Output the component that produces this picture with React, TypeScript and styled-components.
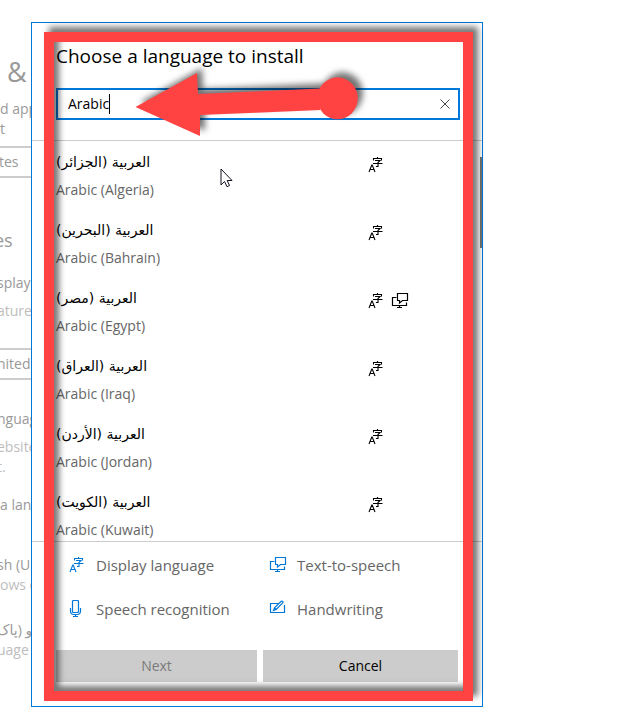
import React, { useState } from "react";
import styled, { createGlobalStyle } from "styled-components";

const Global = createGlobalStyle`
  * { box-sizing: border-box; }
  body {
    margin: 0;
    background: #fff;
    font-family: "Open Sans", "Noto Sans", "DejaVu Sans", sans-serif;
    font-size: 14px;
    line-height: 20px;
    color: #000;
  }
`;

const Page = styled.div`
  display: flex;
  height: 100vh;
  min-height: 480px;
  overflow: hidden;
`;

const Backdrop = styled.aside`
  flex: 0 0 31px;
  padding-top: 52px;
  overflow: hidden;
  white-space: nowrap;
`;

const BackHeading = styled.h1`
  margin: 0 0 7px 7px;
  font-size: 27px;
  font-weight: 400;
  line-height: 40px;
  color: #999;
`;

const BackSubheading = styled.h2<{ $gap: number }>`
  margin: ${(p) => p.$gap}px 0 0 -6px;
  font-size: 18px;
  font-weight: 400;
  line-height: 28px;
  color: #999;
`;

const BackText = styled.p<{ $gap?: number; $faint?: boolean; $cut?: boolean }>`
  margin: ${(p) => p.$gap ?? 0}px 0 0 ${(p) => (p.$cut ? "-3px" : "0")};
  color: ${(p) => (p.$faint ? "#bdbdbd" : "#999")};
`;

const BackField = styled.div<{ $gap: number; $cut?: boolean }>`
  height: 32px;
  margin: ${(p) => p.$gap}px 0 0 ${(p) => (p.$cut ? "-3px" : "-1px")};
  border: solid #ccc;
  border-width: 2px 0;
  line-height: 28px;
  color: #999;
`;

const Dialog = styled.section`
  position: relative;
  flex: 1;
  max-width: 452px;
  margin: 22px 0 17px;
  display: flex;
  flex-direction: column;
  background: #fff;
  border: 1px solid #0078d7;
`;

const Header = styled.header`
  padding: 17px 22px 20px 24px;
  border-bottom: 1px solid #ccc;
`;

const Title = styled.h2`
  margin: 0 0 16px;
  font-size: 19px;
  font-weight: 400;
  line-height: 32px;
`;

const SearchBox = styled.label`
  display: flex;
  align-items: center;
  height: 32px;
  padding: 0 6px 0 10px;
  border: 2px solid #0078d7;
  background: #fff;
`;

const SearchInput = styled.input`
  field-sizing: content;
  min-width: 2px;
  padding: 0;
  border: 0;
  outline: 0;
  background: transparent;
  font: inherit;
  color: #000;
`;

const Caret = styled.span`
  width: 1px;
  height: 20px;
  background: #000;
`;

const ClearButton = styled.button`
  display: flex;
  margin-left: auto;
  padding: 2px;
  border: 0;
  background: none;
  color: #444;
`;

const ListArea = styled.div`
  position: relative;
  flex: 1;
  min-height: 0;
  overflow: hidden;
`;

const List = styled.ul`
  margin: 0;
  padding: 8px 24px 0;
  list-style: none;
`;

const Item = styled.li`
  display: grid;
  grid-template-columns: minmax(0, 1fr) 91px;
  height: 68px;
`;

const Native = styled.div`
  font-family: "DejaVu Sans", sans-serif;
  font-size: 14px;
  line-height: 26px;
  text-align: left;
`;

const English = styled.div`
  line-height: 30px;
  color: #666;
`;

const Features = styled.div`
  display: flex;
  gap: 6px;
  padding-top: 7px;
`;

const Thumb = styled.div`
  position: absolute;
  top: 16px;
  right: 0;
  width: 2px;
  height: 91px;
  background: #777;
`;

const Legend = styled.div`
  display: grid;
  grid-template-columns: 201px minmax(0, 1fr);
  row-gap: 20px;
  padding: 11px 24px 29px 36px;
  border-top: 1px solid #ccc;
`;

const LegendItem = styled.div`
  display: flex;
  align-items: center;
  gap: 10px;
  font-size: 15px;
  line-height: 24px;
  color: #666;
  white-space: nowrap;
  svg { color: #0078d7; }
`;

const Actions = styled.footer`
  display: grid;
  grid-template-columns: 201fr 195fr;
  gap: 6px;
  padding: 0 24px 24px;
`;

const ActionButton = styled.button`
  height: 32px;
  padding: 0;
  border: 0;
  background: #ccc;
  font: inherit;
  color: #000;
  &:disabled { color: #7a7a7a; }
`;

const Frame = styled.div`
  position: absolute;
  inset: 9px 9px 5px 12px;
  border: 10px solid #ff4343;
  filter: drop-shadow(5px -5px 3px rgba(0, 0, 0, 0.55));
  pointer-events: none;
`;

const Arrow = styled.svg`
  position: absolute;
  top: 47px;
  left: 98px;
  overflow: visible;
  filter: drop-shadow(5px -5px 3px rgba(0, 0, 0, 0.55));
  pointer-events: none;
`;

const Pointer = styled.svg`
  position: absolute;
  top: 27px;
  left: 188px;
  pointer-events: none;
`;

const Icon = styled.svg`
  flex: none;
  fill: none;
  stroke: currentColor;
`;

const DisplayIcon = () => (
  <Icon width="18" height="18" viewBox="0 0 18 18" aria-hidden="true">
    <path d="M2 16 L4.8 9 H5.2 L8 16 M3 13.5 H7" strokeWidth="1.1" />
    <path d="M10.5 1 V2.5 M6.5 4.5 V2.5 H14.5 V4.5 M8 4.5 H13 L11 6.5 V10.5 H9 M6 7.5 H15.5" strokeWidth="1.1" />
  </Icon>
);

const SpeechIcon = () => (
  <Icon width="18" height="18" viewBox="0 0 18 18" aria-hidden="true">
    <path d="M5.5 5.5 H1.5 V13.5 H15.5 V10.5 M8.5 13.5 V15.5 M6 15.5 H11" strokeWidth="1.2" />
    <path d="M6.5 1.5 H16.5 V8.5 H11.5 L8.5 11 V8.5 H6.5 Z" strokeWidth="1.2" />
  </Icon>
);

const MicIcon = () => (
  <Icon width="18" height="18" viewBox="0 0 18 18" aria-hidden="true">
    <rect x="4.5" y="0.5" width="6" height="12" rx="1" strokeWidth="1.2" />
    <path d="M2.5 8 V11 Q2.5 14.5 6 14.5 H9 Q12.5 14.5 12.5 11 V8 M7.5 14.5 V16.5 M5 16.5 H10" strokeWidth="1.2" />
  </Icon>
);

const PenIcon = () => (
  <Icon width="18" height="18" viewBox="0 0 18 18" aria-hidden="true">
    <path d="M9 3.5 H1.5 V12.5 H15.5 V5" strokeWidth="1.2" />
    <path d="M4.5 10.5 L5.5 7.8 L12.2 1.3 Q13 0.7 13.7 1.4 Q14.3 2.2 13.7 2.8 L7.2 9.4 Z M5.5 7.8 L7.2 9.4" strokeWidth="1.2" />
  </Icon>
);

const languages = [
  { native: "العربية (الجزائر)", english: "Arabic (Algeria)" },
  { native: "العربية (البحرين)", english: "Arabic (Bahrain)" },
  { native: "العربية (مصر)", english: "Arabic (Egypt)", speech: true },
  { native: "العربية (العراق)", english: "Arabic (Iraq)" },
  { native: "العربية (الأردن)", english: "Arabic (Jordan)" },
  { native: "العربية (الكويت)", english: "Arabic (Kuwait)" },
];

export default function App() {
  const [query, setQuery] = useState("Arabic");
  return (
    <Page>
      <Global />
      <Backdrop>
        <BackHeading>&amp;</BackHeading>
        <BackText>d app</BackText>
        <BackText>t</BackText>
        <BackField $gap={7}>tes</BackField>
        <BackSubheading $gap={48}>es</BackSubheading>
        <BackText $gap={19} $cut>splay</BackText>
        <BackText $gap={8} $faint $cut>atures</BackText>
        <BackField $gap={27} $cut>nited</BackField>
        <BackText $gap={29} $cut>nguag</BackText>
        <BackText $gap={8} $faint $cut>ebsite</BackText>
        <BackText $faint $cut>t.</BackText>
        <BackText $gap={18}>a lan</BackText>
        <BackText $gap={40} $cut>sh (U</BackText>
        <BackText $faint>ows c</BackText>
        <BackText $gap={25} $cut>و (پاک</BackText>
        <BackText $faint $cut>uage</BackText>
      </Backdrop>
      <Dialog aria-label="Choose a language to install">
        <Header>
          <Title>Choose a language to install</Title>
          <SearchBox>
            <SearchInput
              aria-label="Language name"
              value={query}
              onChange={(e) => setQuery(e.target.value)}
            />
            <Caret />
            <ClearButton type="button" aria-label="Clear" onClick={() => setQuery("")}>
              <Icon width="10" height="10" viewBox="0 0 10 10">
                <path d="M0.5 0.5 L9.5 9.5 M9.5 0.5 L0.5 9.5" />
              </Icon>
            </ClearButton>
          </SearchBox>
        </Header>
        <ListArea>
          <List>
            {languages.map((l) => (
              <Item key={l.english}>
                <div>
                  <Native dir="rtl" lang="ar">{l.native}</Native>
                  <English>{l.english}</English>
                </div>
                <Features>
                  <DisplayIcon />
                  {l.speech && <SpeechIcon />}
                </Features>
              </Item>
            ))}
          </List>
          <Thumb />
          <Pointer width="14" height="20" viewBox="0 0 14 20" aria-hidden="true">
            <path
              d="M1 1 V17 L4.5 13.5 L7 18.7 L9.5 17.5 L7.2 12.5 H12 Z"
              fill="#fff"
              stroke="#112"
            />
          </Pointer>
        </ListArea>
        <Legend>
          <LegendItem><DisplayIcon />Display language</LegendItem>
          <LegendItem><SpeechIcon />Text-to-speech</LegendItem>
          <LegendItem><MicIcon />Speech recognition</LegendItem>
          <LegendItem><PenIcon />Handwriting</LegendItem>
        </Legend>
        <Actions>
          <ActionButton type="button" disabled>Next</ActionButton>
          <ActionButton type="button">Cancel</ActionButton>
        </Actions>
        <Frame />
        <Arrow width="230" height="70" viewBox="0 0 230 70" aria-hidden="true">
          <path d="M5.5 37 L67 3 L68 24 L190 18.5 V40 L70 45 V66 Z" fill="#ff4343" />
          <ellipse cx="207.5" cy="28.3" rx="20.3" ry="21" fill="#ff4343" />
        </Arrow>
      </Dialog>
    </Page>
  );
}
